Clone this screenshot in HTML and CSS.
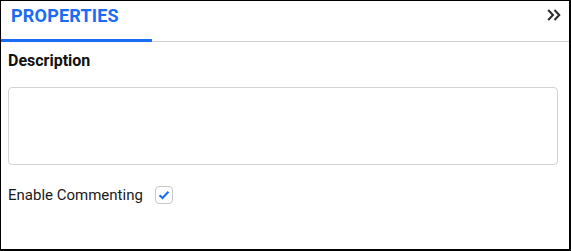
FILE: index.html
```html
<!DOCTYPE html>
<html lang="en">
<head>
  <meta charset="UTF-8" />
  <title>Properties</title>
  <link rel="stylesheet" href="styles.css">
</head>
<body>
  <div class="panel">
    <!-- Tab bar -->
    <div class="panel-header">
      <div class="tab active">PROPERTIES</div>
      <button class="collapse-btn" title="Collapse">
        <svg width="14" height="12" viewBox="0 0 14 12">
          <path d="M1.2 1 L6 6 L1.2 11 M7.5 1 L12.3 6 L7.5 11" fill="none" stroke="#2b2b2b" stroke-width="2"/>
        </svg>
      </button>
    </div>
    <!-- Body -->
    <div class="panel-body">
      <label class="field-label" for="desc">Description</label>
      <textarea id="desc" class="desc-input"></textarea>
      <div class="check-row">
        <span class="check-label">Enable Commenting</span>
        <span class="checkbox">
          <svg width="12" height="10" viewBox="0 0 12 10">
            <path d="M1.5 5.2 L4.5 8 L10.5 1.8" fill="none" stroke="#1a6cf2" stroke-width="2"/>
          </svg>
        </span>
      </div>
    </div>
  </div>
</body>
</html>
```

FILE: styles.css
```css
/* ---------- RESET ---------- */
* {
  margin: 0;
  padding: 0;
  box-sizing: border-box;
}
body {
  font-family: Roboto, "Liberation Sans", Arial, sans-serif;
  color: #111;
  background: #fff;
}
/* ---------- PANEL ---------- */
.panel {
  width: 571px;
  height: 251px;
  border: 1px solid #000;
  border-right-width: 2px;
  border-bottom-width: 2px;
  overflow: hidden;
}
.panel-header {
  display: flex;
  justify-content: space-between;
  align-items: flex-start;
  height: 41px;
  border-bottom: 1px solid #cfcfcf;
}
.tab {
  width: 151px;
  height: 41px;
  padding: 4px 0 0 10px;
  font-size: 18px;
  font-weight: bold;
  line-height: 22px;
  color: #1a6cf2;
  letter-spacing: 0.2px;
}
.tab.active {
  border-bottom: 3px solid #1a6cf2;
}
.collapse-btn {
  background: none;
  border: none;
  margin: 8px 8px 0 0;
  width: 14px;
  height: 12px;
  cursor: pointer;
}
/* ---------- BODY ---------- */
.panel-body {
  padding: 10px 11px 0 7px;
  display: flex;
  flex-direction: column;
}
.field-label {
  font-size: 16px;
  font-weight: bold;
  line-height: 18px;
}
.desc-input {
  margin-top: 17px;
  height: 78px;
  border: 1px solid #d3d3d3;
  border-radius: 4px;
  resize: none;
  outline: none;
}
.check-row {
  display: flex;
  align-items: center;
  margin-top: 21px;
}
.check-label {
  font-size: 15px;
  color: #1a1a1a;
}
.checkbox {
  display: flex;
  align-items: center;
  justify-content: center;
  width: 18px;
  height: 18px;
  margin-left: 12px;
  border: 1px solid #c8c8c8;
  border-radius: 4px;
}
```
